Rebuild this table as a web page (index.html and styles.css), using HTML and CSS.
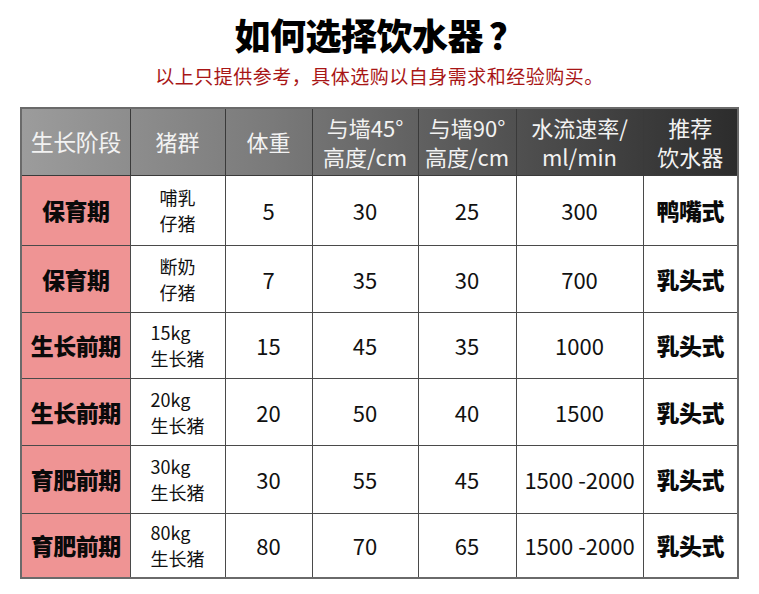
FILE: index.html
```html
<!DOCTYPE html>
<html lang="zh-CN">
<head>
<meta charset="utf-8">
<title>如何选择饮水器？</title>
<link rel="stylesheet" href="styles.css">
</head>
<body>
<div class="page">
  <h1 class="title">如何选择饮水器<span class="qm">？</span></h1>
  <p class="subtitle">以上只提供参考，具体选购以自身需求和经验购买。</p>
  <table class="spec">
    <colgroup>
      <col class="c1"><col class="c2"><col class="c3"><col class="c4"><col class="c5"><col class="c6"><col class="c7">
    </colgroup>
    <thead>
      <tr class="head">
        <th class="h-stage">生长阶段</th>
        <th>猪群</th>
        <th>体重</th>
        <th>与墙45°<br>高度/cm</th>
        <th>与墙90°<br>高度/cm</th>
        <th>水流速率/<br>ml/min</th>
        <th>推荐<br>饮水器</th>
      </tr>
    </thead>
    <tbody>
      <tr class="r1">
        <td class="stage">保育期</td>
        <td class="group"><span class="grp">哺乳<br>仔猪</span></td>
        <td>5</td><td>30</td><td>25</td><td>300</td>
        <td class="rec">鸭嘴式</td>
      </tr>
      <tr class="r2">
        <td class="stage">保育期</td>
        <td class="group"><span class="grp">断奶<br>仔猪</span></td>
        <td>7</td><td>35</td><td>30</td><td>700</td>
        <td class="rec">乳头式</td>
      </tr>
      <tr class="r3">
        <td class="stage">生长前期</td>
        <td class="group"><span class="grp">15kg<br>生长猪</span></td>
        <td>15</td><td>45</td><td>35</td><td>1000</td>
        <td class="rec">乳头式</td>
      </tr>
      <tr class="r4">
        <td class="stage">生长前期</td>
        <td class="group"><span class="grp">20kg<br>生长猪</span></td>
        <td>20</td><td>50</td><td>40</td><td>1500</td>
        <td class="rec">乳头式</td>
      </tr>
      <tr class="r5">
        <td class="stage">育肥前期</td>
        <td class="group"><span class="grp">30kg<br>生长猪</span></td>
        <td>30</td><td>55</td><td>45</td><td>1500 -2000</td>
        <td class="rec">乳头式</td>
      </tr>
      <tr class="r6">
        <td class="stage">育肥前期</td>
        <td class="group"><span class="grp">80kg<br>生长猪</span></td>
        <td>80</td><td>70</td><td>65</td><td>1500 -2000</td>
        <td class="rec">乳头式</td>
      </tr>
    </tbody>
  </table>
</div>
</body>
</html>
```

FILE: styles.css
```css
html, body {
  margin: 0;
  padding: 0;
  background: #ffffff;
}

.page {
  width: 759px;
  font-family: "Noto Sans CJK SC", "Noto Sans", sans-serif;
  color: #111111;
}

.title {
  margin: 12px 0 0 0;
  text-align: center;
  font-size: 36px;
  line-height: 44px;
  font-weight: 900;
  color: #000000;
  letter-spacing: -0.5px;
}

.qm {
  margin-left: 6px;
}

.subtitle {
  margin: 7px 0 0 0;
  text-align: center;
  font-size: 19px;
  line-height: 26px;
  color: #a81616;
  letter-spacing: 0.5px;
}

.spec {
  margin: 18px 0 0 20px;
  width: 717px;
  border-collapse: collapse;
  table-layout: fixed;
  border: 2px solid #6a6a6a;
}

.c1 { width: 109px; }
.c2 { width: 95px; }
.c3 { width: 87px; }
.c4 { width: 106px; }
.c5 { width: 98px; }
.c6 { width: 127px; }
.c7 { width: 95px; }

.spec th,
.spec td {
  border: 1px solid #4a4a4a;
  padding: 0;
  text-align: center;
  vertical-align: middle;
}

.head {
  height: 67px;
  background: linear-gradient(to right, #9c9c9c 0%, #7a7a7a 35%, #555555 65%, #2c2c2c 100%);
}

.spec th {
  color: #f2f2f2;
  font-weight: 400;
  font-size: 22px;
  line-height: 29px;
  border-color: #3a3a3a;
}

.spec th.h-stage {
  font-size: 23px;
  letter-spacing: -0.5px;
}

.spec td {
  font-size: 22px;
  line-height: 28px;
  color: #111111;
}

.r1 { height: 70px; }
.r2 { height: 67px; }
.r3 { height: 66px; }
.r4 { height: 67px; }
.r5 { height: 68px; }
.r6 { height: 65px; }

.spec td.stage {
  background: #ef9494;
  font-size: 23px;
  font-weight: 900;
  color: #0a0a0a;
  letter-spacing: -0.5px;
}

.spec td.group {
  font-size: 18px;
  line-height: 26px;
}

.grp {
  display: inline-block;
  text-align: left;
}

.spec td.rec {
  font-size: 23px;
  font-weight: 900;
  color: #0a0a0a;
  letter-spacing: -0.5px;
}
```
